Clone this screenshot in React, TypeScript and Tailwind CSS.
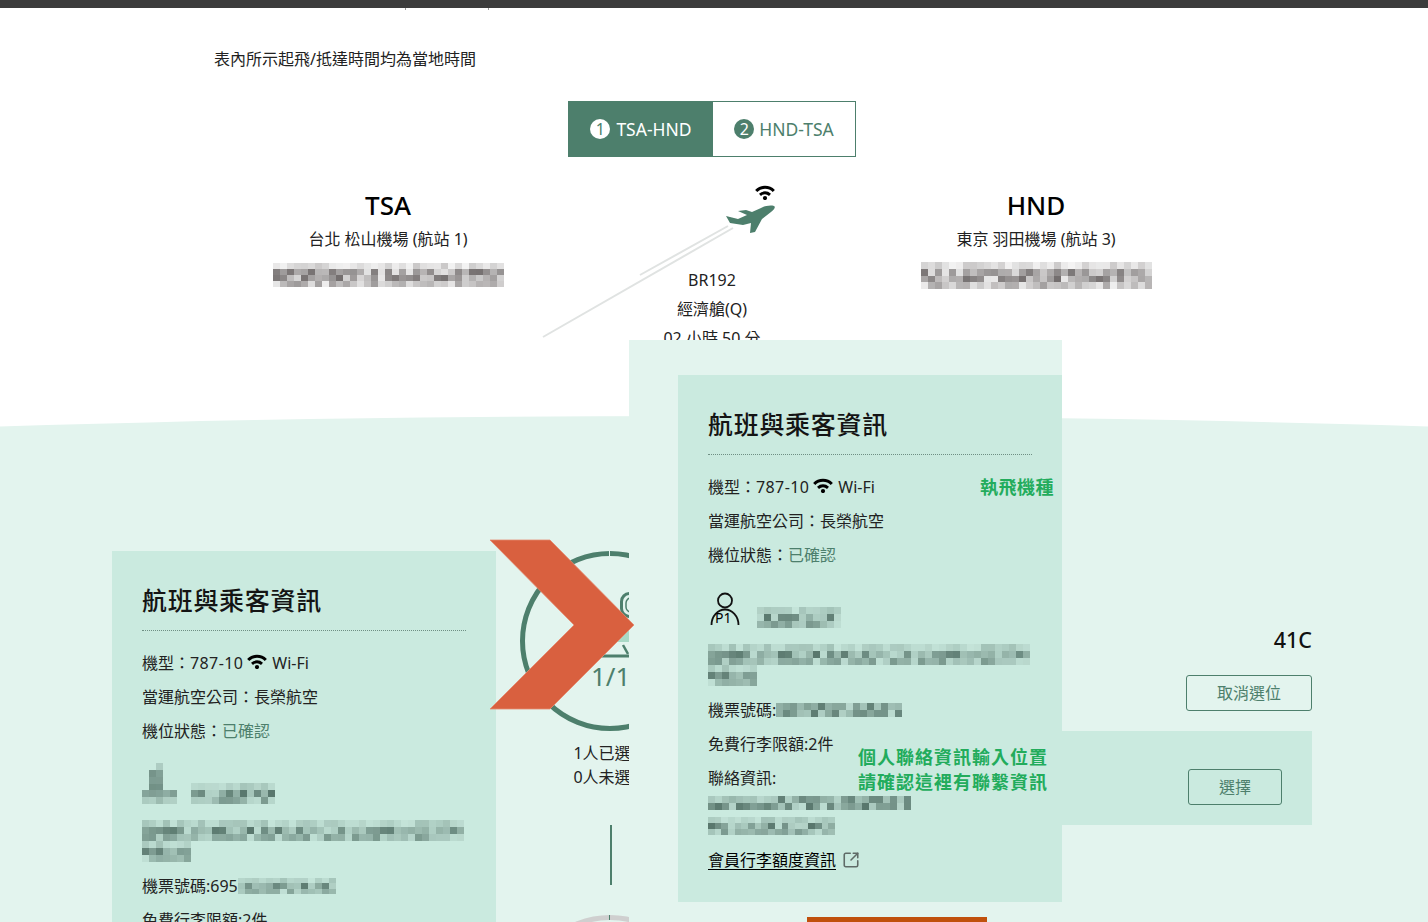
import React from "react";
import { SquareArrowOutUpRight } from "lucide-react";

const GREEN = "#4d7f6c";

function Mosaic({ w, h, seed, base, dark, cell = 7, person = false }: { w: number; h: number; seed: number; base: number[]; dark: number[]; cell?: number; person?: boolean }) {
  const cols = Math.ceil(w / cell);
  const rows = Math.ceil(h / cell);
  const cells: string[] = [];
  let s = seed;
  for (let i = 0; i < cols * rows; i++) {
    s = (s * 16807) % 2147483647;
    const r = (s % 1000) / 1000;
    const row = Math.floor(i / cols);
    const col = i % cols;
    const weight = rows < 3 ? 1 : row === 0 ? 0.35 : row === rows - 1 ? 0.7 : 1;
    const t = (0.12 + r * 0.85) * weight;
    let color = `rgb(${base.map((b, k) => Math.round(b + (dark[k] - b) * t)).join(",")})`;
    if (person) {
      const visible = row === 0 ? col === 2 : row < 4 ? col === 1 || col === 2 : true;
      const tt = row === 0 ? 0.25 : row < 4 ? 0.55 + r * 0.25 : row === 4 ? 0.4 + r * 0.25 : 0.2 + r * 0.2;
      color = visible ? `rgb(${base.map((b, k) => Math.round(b + (dark[k] - b) * tt)).join(",")})` : "transparent";
    }
    cells.push(color);
  }
  return (
    <span
      className="inline-grid shrink-0 overflow-hidden align-middle"
      style={{ width: w, height: h, gridTemplateColumns: `repeat(${cols}, 1fr)`, gridTemplateRows: `repeat(${rows}, 1fr)` }}
    >
      {cells.map((c, i) => (
        <span key={i} style={{ background: c }} />
      ))}
    </span>
  );
}

const onWhite = { base: [250, 250, 250], dark: [110, 105, 105] };
const onCard = { base: [202, 234, 223], dark: [85, 115, 105] };

function Wifi({ className }: { className: string }) {
  return (
    <svg viewBox="0 0 20 15" className={className} fill="none" stroke="currentColor" strokeWidth="3">
      <path d="M1.2 6 C6 1 14 1 18.8 6" />
      <path d="M5 9.8 C8 7.2 12 7.2 15 9.8" />
      <circle cx="10" cy="13" r="2.1" fill="currentColor" stroke="none" />
    </svg>
  );
}

function Ring({ color, tick }: { color: string; tick: string }) {
  return (
    <div className="relative h-[180px] w-[180px] shrink-0 rounded-full border-[5px]" style={{ borderColor: color }}>
      <span className="absolute left-[84px] top-[-5px] h-[5px] w-[1px]" style={{ background: tick }} />
    </div>
  );
}

function Card({ left }: { left: boolean }) {
  return (
    <div className="h-[527px] w-[384px] shrink-0 bg-[#caeadf] px-[30px] pt-[30px] text-[#222]">
      <h2 className="border-b border-dotted border-[#6f8f84] pb-[10px] text-[25px] font-medium leading-[39px] tracking-[0.7px] text-[#141414]">航班與乘客資訊</h2>
      <div className="mt-[15px] flex h-[34px] items-center leading-[34px]">
        機型：<span className="tracking-[0.4px]">787-10</span>
        <Wifi className="ml-[4px] mr-[5px] mt-[-4px] h-[15px] w-[20px] text-black" />
        Wi-Fi
      </div>
      <div className="h-[34px] leading-[34px]">當運航空公司：長榮航空</div>
      <div className="h-[34px] leading-[34px]">
        機位狀態：<span className="text-[#4d7f6c]">已確認</span>
      </div>
      <div className="mt-[16px] flex h-[40px] items-end">
        {left ? (
          <Mosaic w={35} h={41} seed={71} person {...onCard} />
        ) : (
          <div className="relative ml-[2px] h-[40px] w-[35px] shrink-0">
            <svg viewBox="0 0 32 36" className="mt-[4px] h-[36px] w-[32px]" fill="none" stroke="#111" strokeWidth="1.8">
              <circle cx="15" cy="8.5" r="7" />
              <path d="M1.5 33 C1.5 24 8 17.5 15 17.5 C22 17.5 28.5 24 28.5 33" />
            </svg>
            <span className="absolute left-[5px] top-[21px] text-[14px] leading-[18px] text-black">P1</span>
          </div>
        )}
        <span className={left ? "ml-[14px]" : "ml-[12px]"}>
          <Mosaic w={84} h={21} seed={left ? 19 : 23} {...onCard} />
        </span>
      </div>
      <div className="mt-[16px] flex flex-col items-start">
        <Mosaic w={322} h={21} seed={37} {...onCard} />
        <Mosaic w={49} h={21} seed={53} {...onCard} />
      </div>
      <div className="mt-[7px] flex h-[34px] items-center">
        機票號碼:{left ? "695" : ""}
        <Mosaic w={left ? 98 : 126} h={left ? 17 : 14} seed={91} {...onCard} />
      </div>
      <div className="h-[34px] leading-[34px]">免費行李限額:2件</div>
      <div className="h-[34px] leading-[34px]">聯絡資訊:</div>
      <div className="mt-[1px] flex flex-col items-start gap-[7px]">
        <Mosaic w={203} h={14} seed={113} {...onCard} />
        <Mosaic w={127} h={18} seed={131} {...onCard} />
      </div>
      <div className="mt-[8px] flex h-[34px] items-center gap-[6px]">
        <span className="text-black underline underline-offset-[3px]">會員行李額度資訊</span>
        <SquareArrowOutUpRight className="h-[18px] w-[18px] text-[#5f6b67]" strokeWidth={2.1} />
      </div>
    </div>
  );
}

export default function App() {
  return (
    <div lang="zh-TW" className="relative h-[922px] w-[1428px] overflow-hidden bg-white font-['Noto_Sans','Noto_Sans_CJK_TC',sans-serif] text-[16px] text-[#222]">
      <div className="h-2 bg-[#3c3c3c]" />
      <div className="flex h-[2px] gap-[82px] pl-[405px]">
        <span className="h-[2px] w-[1px] bg-[#999]" />
        <span className="h-[2px] w-[1px] bg-[#999]" />
      </div>
      <p className="ml-[214px] mt-[37px] h-[24px] leading-[24px]">表內所示起飛/抵達時間均為當地時間</p>

      <div className="ml-[568px] mt-[30px] flex h-[56px] w-[288px] border border-[#4d7f6c]">
        <div className="flex w-[144px] items-center justify-center gap-[6px] bg-[#4d7f6c] text-[17.5px] text-white">
          <span className="flex h-[20px] w-[20px] items-center justify-center rounded-full bg-white text-[16px] text-[#4d7f6c]">1</span>
          TSA-HND
        </div>
        <div className="flex flex-1 items-center justify-center gap-[5px] text-[17.5px] text-[#4d7f6c]">
          <span className="flex h-[20px] w-[20px] items-center justify-center rounded-full bg-[#4d7f6c] text-[16px] text-white">2</span>
          HND-TSA
        </div>
      </div>

      <div className="ml-[226px] flex h-[258.5px] text-center">
        <div className="w-[324px] pt-[30px]">
          <div className="text-[26px] font-medium leading-[36px] text-black">TSA</div>
          <div className="leading-[32px]">台北 松山機場 (航站 1)</div>
          <div className="mt-[8px] flex justify-center">
            <Mosaic w={231} h={24} seed={211} {...onWhite} />
          </div>
        </div>
        <div className="relative w-[324px] pt-[109px] leading-[29px]">
          <svg viewBox="0 0 240 160" className="absolute left-[-10px] top-[23px] h-[160px] w-[240px]">
            <path d="M3 157 L193 48 M100 95 L188 46" stroke="#e0e3e2" strokeWidth="2" fill="none" />
            <path
              d="M234 26 C230 25 225 26 221 28 L212 32 L206 30 L198 31 L207 35 L198 39 L186 36 L190 43 L203 45 L211 43 L210 53 L215 52 L222 39 L231 32 C234 30 236 27 234 26 Z"
              fill="#4d7f6c"
            />
          </svg>
          <Wifi className="absolute left-[205px] top-[28px] h-[15px] w-[20px] text-black" />
          <div>BR192</div>
          <div>經濟艙(Q)</div>
          <div>02 小時 50 分</div>
        </div>
        <div className="w-[324px] pt-[30px]">
          <div className="text-[26px] font-medium leading-[36px] text-black">HND</div>
          <div className="leading-[32px]">東京 羽田機場 (航站 3)</div>
          <div className="mt-[7px] flex justify-center">
            <Mosaic w={231} h={27} seed={307} {...onWhite} />
          </div>
        </div>
      </div>

      <section className="ml-[-486px] flex h-[600px] w-[2400px] rounded-t-[50%_54px] bg-[#e3f4ee] pl-[598px] pt-[135.5px]">
        <Card left />
        <div className="ml-[24px] flex w-[180px] shrink-0 flex-col items-center">
          <Ring color={GREEN} tick="#e3f4ee" />
          <div className="mt-[10px] shrink-0 text-[16px] leading-[24px] text-[#222]">1人已選位</div>
          <div className="shrink-0 text-[16px] leading-[24px] text-[#222]">0人未選位</div>
          <div className="ml-[2px] mt-[36px] h-[60px] w-[2px] shrink-0 bg-[#4d7f6c]" />
          <div className="mt-[30px] shrink-0">
            <Ring color="#cfcfcf" tick="#4d7f6c" />
          </div>
        </div>
        <div className="flex w-[612px] shrink-0 flex-col">
          <div className="mt-[73px] text-right text-[21.5px] font-medium leading-[32px] text-[#111]">41C</div>
          <div className="mt-[19px] flex justify-end">
            <button className="h-[36px] w-[126px] rounded-[3px] border border-[#4d7f6c] text-[16px] text-[#4d7f6c]">取消選位</button>
          </div>
          <div className="mt-[20px] flex h-[94px] items-end justify-end bg-[#caeadf] pb-[20px] pr-[30px]">
            <button className="h-[36px] w-[94px] rounded-[3px] border border-[#4d7f6c] text-[16px] text-[#4d7f6c]">選擇</button>
          </div>
        </div>
      </section>

      {/* seat glyph inside the first ring */}
      <div className="absolute left-[591px] top-[590px] h-[100px] w-[38px] overflow-hidden">
        <svg viewBox="0 0 38 70" className="absolute left-0 top-0 h-[70px] w-[38px]" fill="none">
          <rect x="15" y="33" width="23" height="19" fill="#a9d9c6" />
          <rect x="30.5" y="3.5" width="18" height="23" rx="8" stroke="#4d7f6c" strokeWidth="3" />
          <rect x="35" y="8" width="10" height="14" rx="5" stroke="#4d7f6c" strokeWidth="1.5" />
          <path d="M32 55 L37 64" stroke="#4d7f6c" strokeWidth="2.5" />
          <path d="M5 66 L38 66" stroke="#4d7f6c" strokeWidth="3" />
        </svg>
        <div className="absolute left-0 top-[68px] text-[26px] leading-[36px] text-[#4d7f6c]">1/1</div>
      </div>

      {/* overlaid enlarged panel */}
      <div className="absolute left-[629px] top-[340px] h-[582px] w-[433px] bg-[#e3f4ee] pl-[49px] pt-[35px]">
        <div className="relative">
          <Card left={false} />
          <div className="absolute left-[302px] top-[98px] text-[18px] font-bold leading-[28px] tracking-[0.5px] text-[#22ac5c]">執飛機種</div>
          <div className="absolute left-[180px] top-[370px] text-[18px] font-bold leading-[25px] tracking-[1px] text-[#22ac5c]">
            個人聯絡資訊輸入位置
            <br />
            請確認這裡有聯繫資訊
          </div>
        </div>
        <div className="ml-[129px] mt-[15px] h-[20px] w-[180px] bg-[#c0500c]" />
      </div>

      {/* annotation arrow */}
      <svg viewBox="0 0 146 171" className="absolute left-[489px] top-[539px] h-[171px] w-[146px]">
        <path d="M1 1 L61 1 L145 86 L61 170 L1 170 L85 86 Z" fill="#d9603f" stroke="#e58a70" strokeWidth="0.8" />
      </svg>
    </div>
  );
}
